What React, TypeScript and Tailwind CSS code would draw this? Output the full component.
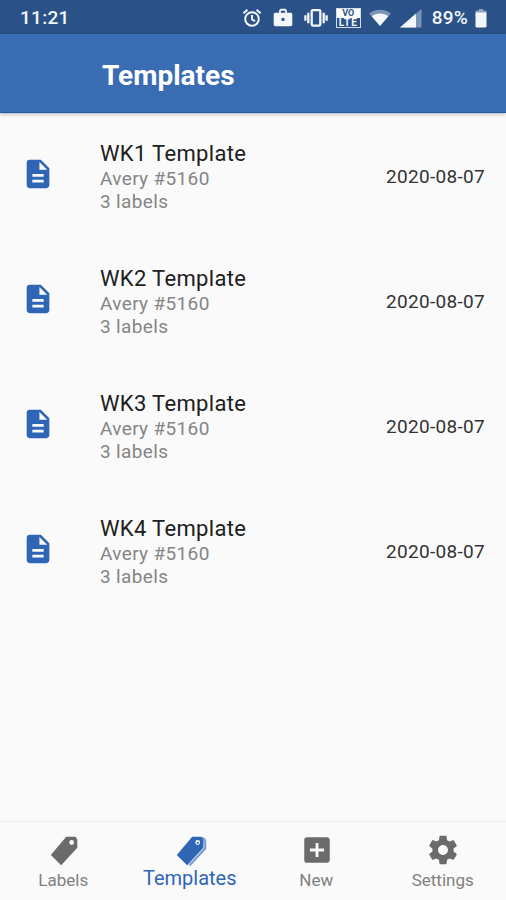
import type { ReactNode } from "react";
import { MdAddBox } from "react-icons/md";

const templates = [
  { name: "WK1 Template", sheet: "Avery #5160", count: 3, date: "2020-08-07" },
  { name: "WK2 Template", sheet: "Avery #5160", count: 3, date: "2020-08-07" },
  { name: "WK3 Template", sheet: "Avery #5160", count: 3, date: "2020-08-07" },
  { name: "WK4 Template", sheet: "Avery #5160", count: 3, date: "2020-08-07" },
];

function AlarmIcon() {
  return (
    <svg width="20" height="20" viewBox="0 0 20 20" fill="none" stroke="currentColor" strokeWidth="2">
      <circle cx="10" cy="11" r="6.8" />
      <path d="M1.4 5.2 5.4 1.8M18.6 5.2 14.6 1.8M10 7v4.4l3 1.8" />
    </svg>
  );
}

function WorkIcon() {
  return (
    <svg width="20" height="20" viewBox="0 0 20 20" fill="currentColor">
      <path
        fillRule="evenodd"
        d="M7.6.8h4.8l1.5 1.5v2.4h3.7c1 0 1.7.7 1.7 1.7v10.2c0 1-.7 1.7-1.7 1.7H2.4c-1 0-1.7-.7-1.7-1.7V6.4c0-1 .7-1.7 1.7-1.7h3.7V2.3zM7.9 2.8v1.9h4.2V2.8zM10 9.7a1.7 1.7 0 1 0 0 3.4 1.7 1.7 0 0 0 0-3.4z"
      />
    </svg>
  );
}

function VibrationIcon() {
  return (
    <svg width="24" height="20" viewBox="0 0 24 20" fill="none" stroke="currentColor" strokeWidth="2.3">
      <rect x="7.7" y="2.2" width="8.6" height="15.4" rx="1" />
      <path d="M4.3 4.8v10.4M19.7 4.8v10.4M1.4 7.3v5.4M22.6 7.3v5.4" />
    </svg>
  );
}

function VolteIcon() {
  return (
    <div className="h-5 w-[25px] border border-white/80 text-center text-[9px] leading-[9px] font-bold">
      <div className="h-[9px] bg-white text-[#2a5288]">VO</div>
      <div className="h-[9px] text-[10px] tracking-[1px]">LTE</div>
    </div>
  );
}

function WifiIcon() {
  return (
    <svg width="22" height="18" viewBox="0 0 22 18" fill="currentColor">
      <path opacity="0.4" d="M0 4.6C6-.6 16-.6 22 4.6L11 17z" />
      <path d="M2.8 7.2c4.6-3.6 11.8-3.6 16.4 0L11 17z" />
    </svg>
  );
}

function SignalIcon() {
  return (
    <svg width="22" height="19" viewBox="0 0 22 19" fill="currentColor">
      <path opacity="0.4" d="M0 18.5 21.5 0v18.5z" />
      <path d="M0 18.5 16 4.5v14z" />
    </svg>
  );
}

function BatteryIcon() {
  return (
    <svg width="12" height="19" viewBox="0 0 12 19" fill="currentColor">
      <path opacity="0.5" d="M4 0h4v1.5h2.5l1 1V4H.5V2.5l1-1H4z" />
      <path d="M.5 3.5h11v14l-1 1h-9l-1-1z" />
    </svg>
  );
}

function DocumentIcon() {
  return (
    <svg width="34" height="34" viewBox="0 0 24 24" fill="currentColor">
      <path d="M14 2H6c-1.1 0-1.99.9-1.99 2L4 20c0 1.1.89 2 1.99 2H18c1.1 0 2-.9 2-2V8l-6-6zm2 16H8v-2h8v2zm0-4H8v-2h8v2zm-3-5V3.5L18.5 9H13z" />
    </svg>
  );
}

function TagIcon({ stacked = false }: { stacked?: boolean }) {
  return (
    <svg className="ml-px" width="34" height="34" viewBox="0 0 34 34" fill="currentColor">
      {stacked && <path opacity="0.65" d="M29 4.2h2l2.2 2.5v9.2L17.4 33l-2.2-1.2 15.6-17z" />}
      {stacked && <path d="M30.9 5.5v9.4L15 32.6" fill="none" stroke="#fafafa" strokeWidth="0.6" />}
      <path
        fillRule="evenodd"
        d="M19.2 3.8h9.2l1.9 2.4v8.6L14.2 32.2 3.8 22.1zM24.7 7.1a2.4 2.4 0 1 0 0 4.8 2.4 2.4 0 0 0 0-4.8z"
      />
      {stacked && <circle cx="24.9" cy="9.8" r="1.1" />}
    </svg>
  );
}

function GearIcon() {
  return (
    <svg className="ml-px" width="34" height="34" viewBox="0 0 24 24" fill="currentColor">
      <path d="M19.43 12.98c.04-.32.07-.64.07-.98s-.03-.66-.07-.98l2.11-1.65c.19-.15.24-.42.12-.64l-2-3.46c-.12-.22-.39-.3-.61-.22l-2.49 1c-.52-.4-1.08-.73-1.69-.98l-.38-2.65C14.46 2.18 14.25 2 14 2h-4c-.25 0-.46.18-.49.42l-.38 2.65c-.61.25-1.17.59-1.69.98l-2.49-1c-.23-.09-.49 0-.61.22l-2 3.46c-.13.22-.07.49.12.64l2.11 1.65c-.04.32-.07.65-.07.98s.03.66.07.98l-2.11 1.65c-.19.15-.24.42-.12.64l2 3.46c.12.22.39.3.61.22l2.49-1c.52.4 1.08.73 1.69.98l.38 2.65c.03.24.24.42.49.42h4c.25 0 .46-.18.49-.42l.38-2.65c.61-.25 1.17-.59 1.69-.98l2.49 1c.23.09.49 0 .61-.22l2-3.46c.12-.22.07-.49-.12-.64l-2.11-1.65zM12 15.5c-1.93 0-3.5-1.57-3.5-3.5s1.57-3.5 3.5-3.5 3.5 1.57 3.5 3.5-1.57 3.5-3.5 3.5z" />
    </svg>
  );
}

function StatusBar() {
  return (
    <div className="flex h-[34px] items-center bg-[#2a5288] pt-0.5 pr-[19px] pl-5 text-[#f3f7fc]">
      <span className="flex-1 text-[19px] leading-5 font-medium tracking-[0.3px]">11:21</span>
      <div className="flex items-center">
        <AlarmIcon />
        <span className="ml-[11px]"><WorkIcon /></span>
        <span className="ml-[11px]"><VibrationIcon /></span>
        <span className="ml-2"><VolteIcon /></span>
        <span className="ml-2"><WifiIcon /></span>
        <span className="ml-[9px]"><SignalIcon /></span>
        <span className="ml-2.5 text-[19px] leading-5 font-medium tracking-[0.2px]">89%</span>
        <span className="ml-[7px]"><BatteryIcon /></span>
      </div>
    </div>
  );
}

function NavItem({ icon, label, active = false }: { icon: ReactNode; label: string; active?: boolean }) {
  return (
    <div className={`flex flex-1 flex-col items-center pt-[11px] ${active ? "text-[#2f65b5]" : "text-[#6b6b6b]"}`}>
      {icon}
      <span className={active ? "text-[20px] leading-[22px]" : "pt-0.5 text-[17px] leading-[22px] text-[#808080]"}>
        {label}
      </span>
    </div>
  );
}

export default function App() {
  return (
    <div className="flex h-[900px] w-[506px] flex-col overflow-hidden bg-[#fafafa] font-[Roboto,sans-serif]">
      <StatusBar />
      <header className="flex h-[79px] items-center border-b border-[#2459a0] bg-[#3a6cb4] pt-1.5 pl-[102px] shadow-[0_1px_4px_rgba(0,0,0,0.3)]">
        <h1 className="text-[28px] leading-8 font-bold text-white">Templates</h1>
      </header>

      <main className="flex-1">
        {templates.map((t) => (
          <div key={t.name} className="flex h-[125px] items-center px-[21px]">
            <span className="mb-1 text-[#2f65b5]"><DocumentIcon /></span>
            <div className="ml-[45px] flex-1 pt-0.5">
              <p className="text-[22px] leading-[26px] tracking-[0.33px] text-[#202020]">{t.name}</p>
              <p className="text-[19px] leading-[23px] tracking-[0.35px] text-[#858585]">{t.sheet}</p>
              <p className="text-[19px] leading-[23px] tracking-[0.35px] text-[#858585]">{t.count} labels</p>
            </div>
            <span className="pt-0.5 text-[19px] leading-6 tracking-[0.3px] text-[#333]">{t.date}</span>
          </div>
        ))}
      </main>

      <nav className="flex h-[79px] border-t border-[#eeeeee]">
        <NavItem icon={<TagIcon />} label="Labels" />
        <NavItem icon={<TagIcon stacked />} label="Templates" active />
        <NavItem icon={<MdAddBox className="ml-px" size={34} />} label="New" />
        <NavItem icon={<GearIcon />} label="Settings" />
      </nav>
    </div>
  );
}
